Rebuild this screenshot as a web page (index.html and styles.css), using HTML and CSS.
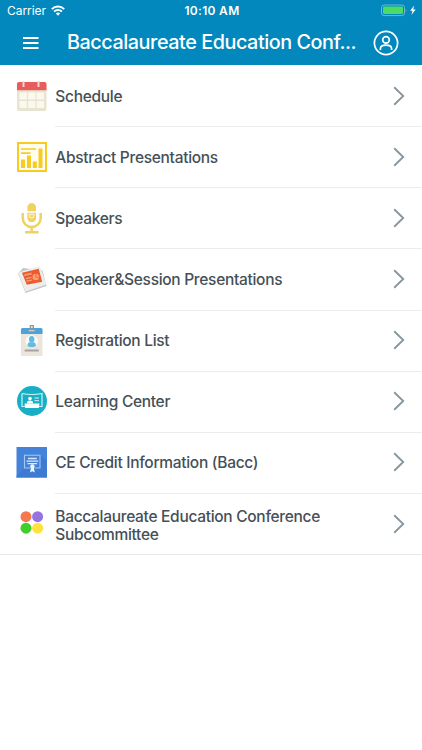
FILE: index.html
```html
<!DOCTYPE html>
<html lang="en">
<head>
<meta charset="utf-8">
<title>Baccalaureate Education Conference</title>
<link rel="stylesheet" href="styles.css">
</head>
<body>
<header class="header">
  <div class="status">
    <div class="carrier"><span>Carrier</span>
      <svg width="14" height="11" viewBox="0 0 14 11"><g fill="none" stroke="#fff" stroke-width="1.9"><path d="M.8 4.1a8.8 8.8 0 0 1 12.4 0M3.1 6.6a5.5 5.5 0 0 1 7.8 0"/></g><path d="M7 10.7 4.8 8.5a3.1 3.1 0 0 1 4.4 0z" fill="#fff"/></svg>
    </div>
    <time class="clock">10:10 AM</time>
    <div class="power">
      <svg width="36" height="13" viewBox="0 0 36 13"><rect x=".5" y="1" width="23" height="10.6" rx="2.6" fill="none" stroke="#69b8d7"/><rect x="2" y="2.5" width="20" height="7.6" rx="1.3" fill="#4cd964"/><path d="M24.7 4.4q1.7 1.9 0 3.8z" fill="#69b8d7"/><path d="m33.2 1.4-4.1 5.4h2.4L30.4 11l4.3-5.6h-2.5z" fill="#fff"/></svg>
    </div>
  </div>
  <div class="nav">
    <svg class="menu" width="16" height="14" viewBox="0 0 16 14"><path d="M0 2h15.500M0 7h15.500M0 12h15.500" stroke="#fff" stroke-width="2"/></svg>
    <h1>Baccalaureate Education Conf...</h1>
    <svg class="profile" width="26" height="26" viewBox="0 0 26 26" fill="none" stroke="#fff" stroke-width="1.7"><circle cx="13" cy="13" r="11.6"/><circle cx="13" cy="9.9" r="3.3"/><path d="M7.4 20v-1.200c0-2.500 2.500-3.600 5.600-3.600s5.600 1.100 5.600 3.600V20"/></svg>
  </div>
</header>
<main class="list">
  <a class="row">
    <svg class="icon" viewBox="0 0 32 32"><rect x="1" y="2" width="29.5" height="29" rx="2" fill="#e9e4d2"/><path d="M3 2h25.5a2 2 0 0 1 2 2v6.300H1V4a2 2 0 0 1 2-2z" fill="#e95c5e"/><path d="M7.500 1v6M22.500 1v6" stroke="#ead8d3" stroke-width="2"/><path d="M3.500 12.500h7.300v7H3.500zm8.600 0h7.300v7h-7.300zm8.600 0H28v7h-7.300zM3.500 21h7.300v7H3.500zm8.600 0h7.300v7h-7.300zm8.600 0H28v7h-7.300z" fill="#fbf9ee"/></svg>
    <span class="label">Schedule</span><svg class="chevron" viewBox="0 0 12 20"><path d="m1.200 1.300 9 8.700-9 8.700"/></svg>
  </a>
  <a class="row">
    <svg class="icon" viewBox="0 0 32 32"><rect x="2" y="2" width="28" height="28" fill="#fffdf0" stroke="#f8cb22" stroke-width="2"/><path d="M5 8h15M5 12.200h9.500" stroke="#f8cb22" stroke-width="1.700"/><path d="M5 18.500h4V27H5zM11 14.500h4V27h-4zM16.800 20.500h4V27h-4zM22.500 7.500h4V27h-4z" fill="#f8cb22"/></svg>
    <span class="label">Abstract Presentations</span><svg class="chevron" viewBox="0 0 12 20"><path d="m1.200 1.300 9 8.700-9 8.700"/></svg>
  </a>
  <a class="row">
    <svg class="icon" viewBox="0 0 32 32"><path d="M11.400 9.300V5.200a4.300 4.300 0 0 1 8.600 0v4.100zM11.400 10.700H20V16a4.300 4.300 0 0 1-8.600 0z" fill="#f0d262"/><path d="M13.300 12.200h4.800v1.500a2.400 2.400 0 0 1-4.800 0z" fill="#f2d875" stroke="#fffbe8" stroke-width=".9"/><path d="M6.700 11v5a9 9 0 0 0 18 0v-5M15.700 25v5M9 30.200h13.500" fill="none" stroke="#f0d262" stroke-width="2.500"/></svg>
    <span class="label">Speakers</span><svg class="chevron" viewBox="0 0 12 20"><path d="m1.200 1.300 9 8.700-9 8.700"/></svg>
  </a>
  <a class="row">
    <svg class="icon" viewBox="0 0 32 32"><path d="m2 10.500 5-5.500 19.500 2.500 4 15.500L9.500 30z" fill="#c4c6c6"/><path d="m2 9.500 22-6.200 6.300 18.200L9.500 28.800z" fill="#eceded"/><path d="m6 9.700 16.700-3.900 3.500 12.900-15.400 3z" fill="#ed5a2c"/><path d="m8 11.300 7.500-1.800.5 1.900-7.500 1.800z" fill="#f39470"/><path d="m10 15.700 5.500-1.300M10.700 18.200l5.500-1.200" stroke="#f9a57e" stroke-width="1.200"/><circle cx="19.800" cy="14" r="3.300" fill="#ff9d73"/><path d="m20 11-.2 3 2.900.8" stroke="#ed5a2c" stroke-width=".8" fill="none"/></svg>
    <span class="label">Speaker&amp;Session Presentations</span><svg class="chevron" viewBox="0 0 12 20"><path d="m1.200 1.300 9 8.700-9 8.700"/></svg>
  </a>
  <a class="row">
    <svg class="icon" viewBox="0 0 32 32"><rect x="5" y="4" width="21.500" height="28" rx="1.500" fill="#ebe5dc"/><path d="M6.500 4H25a1.500 1.500 0 0 1 1.500 1.500V10H5V5.500A1.500 1.500 0 0 1 6.500 4z" fill="#4ba3dc"/><path d="M13.700 1h4.200v4h2.300v3h-8.800V5h2.300z" fill="#8b969b"/><circle cx="15.800" cy="3" r="1" fill="#e9eeee"/><path d="M13 6.700h5.500" stroke="#d7dfe1"/><circle cx="15.700" cy="17.300" r="6.200" fill="#fafcfb"/><ellipse cx="15.700" cy="15.300" rx="2.700" ry="3.200" fill="#61bbe3"/><path d="M11.500 22c0-3.400 1.300-3.800 4.200-3.800s4.200.4 4.200 3.800q-4.200 2.500-8.400 0z" fill="#61bbe3"/><path d="M8.700 26.500h14" stroke="#a5a5a4" stroke-width="2"/></svg>
    <span class="label">Registration List</span><svg class="chevron" viewBox="0 0 12 20"><path d="m1.200 1.300 9 8.700-9 8.700"/></svg>
  </a>
  <a class="row">
    <svg class="icon" viewBox="0 0 32 32"><circle cx="16" cy="16" r="15" fill="#18aec5"/><path d="M6 8.500q10 2 20 0v13h-3.500M9.500 21.500H6v-13" fill="none" stroke="#c9f4f8" stroke-width="1.200"/><circle cx="14" cy="13.500" r="1.800" fill="#fff"/><path d="M11 18.500v-1q0-2 3-2t3 2v1z" fill="#fff"/><path d="M18.500 13H23m-4.500 2.700H23" stroke="#d3f4f7"/><path d="M8.500 18.500h15l-.7 4.500H9.200z" fill="#f7ffff"/></svg>
    <span class="label">Learning Center</span><svg class="chevron" viewBox="0 0 12 20"><path d="m1.200 1.300 9 8.700-9 8.700"/></svg>
  </a>
  <a class="row">
    <svg class="icon" viewBox="0 0 32 32"><path d="M.5 1H31v30.500H.5z" fill="#4383d9"/><path d="M8.500 22 .5 30v1.500H31V15l-7-6v13z" fill="#3c7bd1"/><path d="M14 22H8.500V9.300H24V22h-5.500" fill="#4780d1" stroke="#a5c8f3" stroke-width="1.100"/><path d="M12 12.500h8.700M10.500 15.200h11.700M11.500 17.700h9.700" stroke="#d8e8ff" stroke-width="1.300"/><circle cx="16.400" cy="20.500" r="2.200" fill="#eaf4ff"/><path d="m15 21.500-1 5 2.400-1.300 2.400 1.300-1-5z" fill="#eaf4ff"/></svg>
    <span class="label">CE Credit Information (Bacc)</span><svg class="chevron" viewBox="0 0 12 20"><path d="m1.200 1.300 9 8.700-9 8.700"/></svg>
  </a>
  <a class="row">
    <svg class="icon" viewBox="0 0 32 32"><circle cx="10" cy="8.700" r="5.500" fill="#f57850"/><circle cx="21.600" cy="8.700" r="5.500" fill="#9673df"/><circle cx="10" cy="20.200" r="5.500" fill="#40ce2b"/><circle cx="21.600" cy="20.200" r="5.500" fill="#ffe23c"/></svg>
    <span class="label">Baccalaureate Education Conference Subcommittee</span><svg class="chevron" viewBox="0 0 12 20"><path d="m1.200 1.300 9 8.700-9 8.700"/></svg>
  </a>
</main>
</body>
</html>
```
FILE: styles.css
```css
* { box-sizing: border-box; }
body { margin: 0; min-height: 100vh; background: #fff; color: #455057; font-family: Inter, "Liberation Sans", sans-serif; }
svg { display: block; flex: none; }
.header { height: 65px; background: #0288bd; color: #fff; }
.status { display: grid; grid-template-columns: 1fr auto 1fr; align-items: center; height: 21px; padding: 0 5px 0 7px; }
.carrier { display: flex; align-items: center; gap: 5px; font-size: 12px; letter-spacing: -.05px; }
.clock { font-size: 12px; font-weight: 600; letter-spacing: .3px; }
.power { display: flex; justify-content: flex-end; }
.nav { display: flex; align-items: center; height: 44px; padding: 0 23px; }
.menu { margin-right: 28px; }
h1 { margin: 0 0 2px; flex: 1; font-size: 19.800px; font-weight: 500; line-height: 26px; letter-spacing: -.44px; white-space: nowrap; }
.row { display: flex; align-items: center; height: 61.150px; padding: 0 17px 0 16px; position: relative; }
.row::after { content: ""; position: absolute; left: 55px; right: 0; bottom: -1px; height: 1px; background: #ededee; }
.row:last-child { height: 62px; }
.row:last-child::after { left: 0; bottom: 0; background: #e8e8e8; }
.icon { width: 32px; height: 32px; margin-right: 7.300px; }
.label { flex: 1; max-width: 300px; padding-top: 2px; font-size: 15.500px; font-weight: 500; line-height: 18px; letter-spacing: -.3px; }
.row:last-child .label { padding-top: 4px; }
.chevron { width: 12px; height: 20px; margin-left: auto; }
.chevron path { fill: none; stroke: #89969e; stroke-width: 1.900; }
```
